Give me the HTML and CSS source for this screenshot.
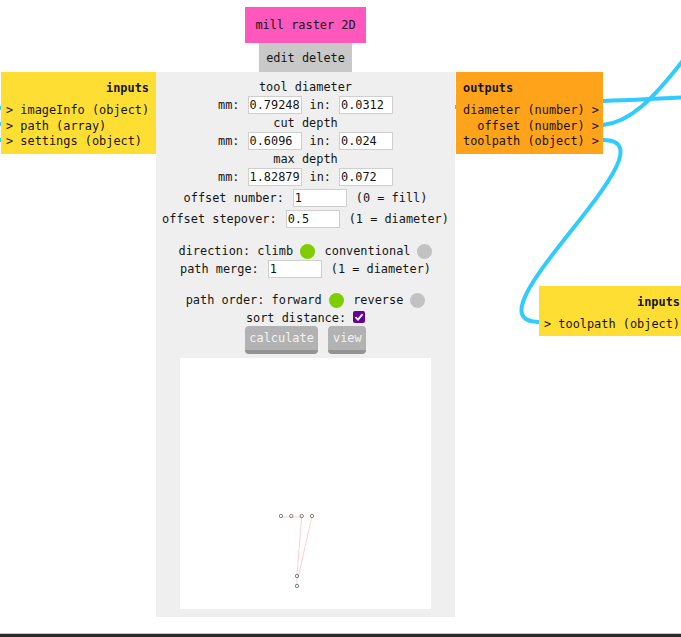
FILE: index.html
```html
<!DOCTYPE html>
<html>
<head>
<meta charset="utf-8">
<title>mill raster 2D</title>
<link rel="stylesheet" href="styles.css">
</head>
<body>
<svg class="wires" width="681" height="637" viewBox="0 0 681 637">
  <path d="M-30,108 L6,108"/>
  <path d="M-30,124 L6,124"/>
  <path d="M-30,140 L6,140"/>
  <path d="M455,107 L603,101 C640,100 660,98 700,97"/>
  <path d="M590,125 L603,125 C630,122 652,100 681,63 L700,39"/>
  <path d="M590,140 L603,140 C683,140 459,322 539,322 L560,322"/>
</svg>

<div class="node">
  <div class="title">mill raster 2D</div>
  <div class="actions">edit delete</div>
  <div class="panel">
    <div class="ports ports-in">
      <div class="ports-head">inputs</div>
      <div class="port">&gt; imageInfo (object)</div>
      <div class="port">&gt; path (array)</div>
      <div class="port">&gt; settings (object)</div>
    </div>
    <div class="ports ports-out">
      <div class="ports-head">outputs</div>
      <div class="port">diameter (number) &gt;</div>
      <div class="port">offset (number) &gt;</div>
      <div class="port">toolpath (object) &gt;</div>
    </div>

    <div class="lbl">tool diameter</div>
    <div class="row"><span>mm:</span><input class="field" value="0.79248"><span>in:</span><input class="field" value="0.0312"></div>
    <div class="lbl">cut depth</div>
    <div class="row"><span>mm:</span><input class="field" value="0.6096"><span>in:</span><input class="field" value="0.024"></div>
    <div class="lbl">max depth</div>
    <div class="row"><span>mm:</span><input class="field" value="1.82879"><span>in:</span><input class="field" value="0.072"></div>

    <div class="row row-gap row-wide"><span>offset number:</span><input class="field" value="1"><span>(0 = fill)</span></div>
    <div class="row row-gap row-wide"><span>offset stepover:</span><input class="field" value="0.5"><span>(1 = diameter)</span></div>

    <div class="row row-direction"><span>direction: climb</span><span class="radio on"></span><span class="opt">conventional</span><span class="radio"></span></div>
    <div class="row row-wide"><span>path merge:</span><input class="field" value="1"><span>(1 = diameter)</span></div>

    <div class="row row-order"><span>path order: forward</span><span class="radio on"></span><span class="opt">reverse</span><span class="radio"></span></div>
    <div class="row row-sort"><span>sort distance:</span><span class="check"><svg width="12" height="12" viewBox="0 0 12 12"><path d="M2.5,6.2 L5,8.6 L9.6,3.2" fill="none" stroke="#fff" stroke-width="1.8"/></svg></span></div>

    <div class="buttons"><button class="btn">calculate</button><button class="btn">view</button></div>

    <div class="canvas">
      <svg width="251" height="251" viewBox="0 0 251 251">
        <g stroke="#ffc4c4" stroke-width="0.8" fill="none">
          <path d="M101,159 L121.7,159"/>
          <path d="M121.7,158 L117,218"/>
          <path d="M132,158 L118,220"/>
          <path d="M117,218 L117,228"/>
        </g>
        <g stroke="#666" stroke-width="0.8" fill="none">
          <circle cx="101" cy="158" r="1.7"/>
          <circle cx="111.3" cy="158" r="1.7"/>
          <circle cx="121.7" cy="158" r="1.7"/>
          <circle cx="132" cy="158" r="1.7"/>
          <circle cx="117" cy="218" r="1.7"/>
          <circle cx="117" cy="228" r="1.7"/>
        </g>
      </svg>
    </div>
  </div>
</div>

<div class="node-right">
  <div class="ports-head">inputs</div>
  <div class="port">&gt; toolpath (object)</div>
</div>

<div class="screen-edge"></div>
</body>
</html>
```

FILE: styles.css
```css
html, body {
  margin: 0;
  padding: 0;
}

body {
  position: relative;
  width: 681px;
  height: 637px;
  overflow: hidden;
  background: #ffffff;
  color: #151515;
  font-family: "DejaVu Sans Mono", "Liberation Mono", monospace;
  font-size: 11.9px;
}

.wires {
  position: absolute;
  left: 0;
  top: 0;
  z-index: 0;
}

.wires path {
  fill: none;
  stroke: #30cbff;
  stroke-width: 4;
}

.node {
  position: absolute;
  left: 156px;
  top: 7px;
  width: 299px;
  z-index: 1;
  display: flex;
  flex-direction: column;
  align-items: center;
}

.title {
  height: 36px;
  line-height: 37px;
  padding: 0 10.5px;
  background: #ff57bb;
  white-space: pre;
}

.actions {
  height: 29px;
  line-height: 30px;
  padding: 0 7px;
  background: #c8c8c8;
  white-space: pre;
}

.panel {
  position: relative;
  width: 299px;
  box-sizing: border-box;
  padding: 6px 0 8px;
  background: #efefef;
  display: flex;
  flex-direction: column;
  align-items: center;
}

.ports {
  position: absolute;
  top: 0;
  line-height: 15.5px;
}

.port,
.ports-head {
  height: 15.5px;
  white-space: pre;
}

.ports-head {
  font-weight: bold;
  margin-bottom: 6.5px;
}

.ports-in {
  right: 100%;
  width: 143px;
  padding: 9px 7px 4px 5px;
  background: #ffde33;
}

.ports-in .ports-head {
  text-align: right;
}

.ports-out {
  left: calc(100% + 1px);
  width: 136px;
  padding: 9px 4px 4px 7px;
  background: #ffa31a;
}

.ports-out .port {
  text-align: right;
}

.node-right {
  position: absolute;
  left: 539px;
  top: 286px;
  width: 136px;
  padding: 8.5px 7px 4px 5px;
  background: #ffde33;
  line-height: 15.5px;
  z-index: 1;
}

.node-right .ports-head {
  text-align: right;
}

.lbl {
  height: 18px;
  line-height: 19px;
  white-space: pre;
}

.row {
  display: flex;
  align-items: center;
  justify-content: center;
  gap: 8px;
  height: 18px;
  line-height: 18px;
  white-space: pre;
}

.row-wide {
  gap: 9px;
}

.row-gap {
  margin-top: 3px;
}

.field {
  width: 54px;
  height: 18px;
  box-sizing: border-box;
  margin: 0;
  padding: 0 1px;
  border: 1px solid #cfcfcf;
  background: #ffffff;
  color: #151515;
  font-family: "DejaVu Sans Mono", "Liberation Mono", monospace;
  font-size: 11.9px;
  outline: none;
}

.row-direction {
  margin-top: 14px;
  gap: 0;
}

.row-order {
  margin-top: 13px;
  gap: 0;
}

.radio {
  width: 15px;
  height: 15px;
  border-radius: 50%;
  background: #c2c2c2;
  margin-left: 7px;
}

.radio.on {
  background: #7fcc00;
}

.opt {
  margin-left: 9.5px;
}

.row-sort {
  height: 17px;
  gap: 7px;
}

.check {
  width: 12px;
  height: 12px;
  border-radius: 2px;
  background: #650099;
  display: flex;
  margin-top: -2px;
}

.buttons {
  display: flex;
  gap: 10px;
}

.btn {
  height: 28px;
  box-sizing: border-box;
  margin: 0;
  padding: 0 4.6px;
  border: none;
  border-bottom: 4.5px solid #939393;
  border-radius: 4px;
  background: #b2b2b2;
  color: #f3f3f3;
  font-family: "DejaVu Sans Mono", "Liberation Mono", monospace;
  font-size: 11.9px;
  line-height: 23px;
}

.canvas {
  margin-top: 4px;
  width: 251px;
  height: 251px;
  background: #ffffff;
}

.canvas svg {
  display: block;
}

.screen-edge {
  position: absolute;
  left: 0;
  right: 0;
  bottom: 0;
  height: 3px;
  border-top: 1px solid #c9c9c9;
  background: #2a2a2a;
  z-index: 2;
}
```
